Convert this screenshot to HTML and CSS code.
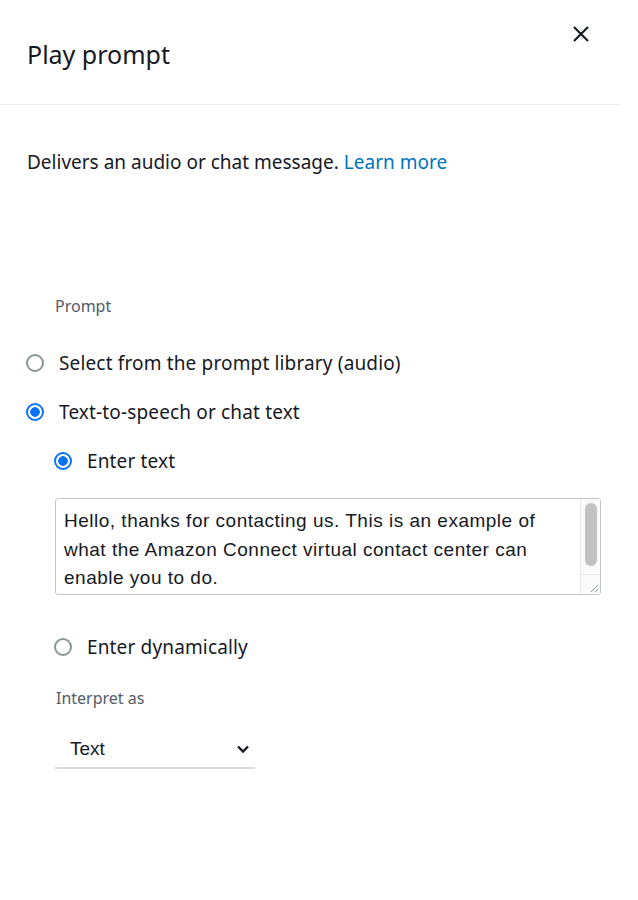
FILE: index.html
```html
<!DOCTYPE html>
<html>
<head>
<meta charset="utf-8">
<link rel="stylesheet" href="styles.css">
</head>
<body>
<div class="panel">
  <header class="header">
    <h1 class="title">Play prompt</h1>
    <button class="close" aria-label="Close">
      <svg width="18" height="18" viewBox="0 0 18 18"><path d="M2 2L16 16M16 2L2 16" stroke="#16191f" stroke-width="2.2" fill="none"/></svg>
    </button>
  </header>
  <main class="body">
    <p class="desc">Delivers an audio or chat message. <a class="link" href="#">Learn more</a></p>
    <div class="label prompt-label">Prompt</div>
    <div class="radio-row r1"><span class="radio"></span><span class="rtext">Select from the prompt library (audio)</span></div>
    <div class="radio-row r2"><span class="radio on"></span><span class="rtext">Text-to-speech or chat text</span></div>
    <div class="sub">
      <div class="radio-row r3"><span class="radio on"></span><span class="rtext">Enter text</span></div>
      <div class="textarea">
        <div class="ta-text">Hello, thanks for contacting us. This is an example of what the Amazon Connect virtual contact center can enable you to do.</div>
        <div class="ta-scroll">
          <div class="ta-track"><div class="ta-thumb"></div></div>
          <div class="ta-corner">
            <svg width="10" height="10" viewBox="0 0 10 10"><path d="M9 2L2 9M9 6L6 9" stroke="#8f9494" stroke-width="1" fill="none"/></svg>
          </div>
        </div>
      </div>
      <div class="radio-row r4"><span class="radio"></span><span class="rtext">Enter dynamically</span></div>
      <div class="label interp-label">Interpret as</div>
      <div class="select">
        <span class="sel-text">Text</span>
        <svg width="14" height="10" viewBox="0 0 14 10"><path d="M2 2.5L7 7.5L12 2.5" stroke="#16191f" stroke-width="2.4" fill="none"/></svg>
      </div>
    </div>
  </main>
</div>
</body>
</html>
```
FILE: styles.css
```css
* { box-sizing: border-box; }
html, body { margin: 0; padding: 0; background: #fff; }
body { font-family: "Noto Sans", "Open Sans", sans-serif; color: #16191f; }
.panel { width: 620px; }
.header {
  height: 105px;
  border-bottom: 1px solid #eaeded;
  display: flex;
  justify-content: space-between;
  align-items: flex-start;
  padding: 0 27px;
}
.title {
  margin: 38px 0 0 0;
  font-size: 25px;
  line-height: 32px;
  font-weight: 400;
  letter-spacing: 0;
  color: #16191f;
}
.close {
  margin-top: 25px;
  margin-right: 3px;
  border: 0;
  background: none;
  padding: 0;
  width: 18px;
  height: 18px;
}
.body { padding: 0 0 0 27px; }
.desc {
  margin: 45px 0 0 0;
  font-size: 19px;
  line-height: 24px;
  color: #16191f;
}
.link { color: #0073bb; text-decoration: none; }
.label { font-size: 16px; line-height: 22px; color: #545b64; }
.prompt-label { margin-top: 121px; padding-left: 28px; }
.radio-row { display: flex; align-items: center; height: 26px; }
.r1 { margin-top: 33px; }
.r2 { margin-top: 23px; }
.radio {
  width: 18px; height: 18px; border-radius: 50%;
  border: 2px solid #879596; flex: none; background: #fff;
  margin-left: -1px;
}
.radio.on { background: radial-gradient(circle, #0a73f5 0 4.5px, #fff 5px); border-color: #0a73f5; }
.rtext { margin-left: 15px; font-size: 19px; line-height: 24px; letter-spacing: 0.15px; color: #16191f; }
.sub { padding-left: 28px; }
.r3 { margin-top: 23px; }
.textarea {
  margin-top: 24px;
  width: 546px;
  height: 97px;
  border: 1px solid #c4c8c9;
  border-radius: 3px;
  display: flex;
}
.ta-text {
  flex: 1;
  padding: 8px 8px 0 8px;
  font-family: "Liberation Sans", Arial, sans-serif;
  font-size: 19px;
  letter-spacing: 0.5px;
  line-height: 28.5px;
  color: #16191f;
}
.ta-scroll {
  width: 20px;
  border-left: 1px solid #e7e7e7;
  display: flex;
  flex-direction: column;
  background: #fafafa;
}
.ta-track { flex: 1; padding: 4px 3px; }
.ta-thumb { width: 12px; height: 63px; border-radius: 6px; background: #c1c1c1; margin-left: 1px; }
.ta-corner {
  height: 20px; border-top: 1px solid #e7e7e7;
  display: flex; align-items: flex-end; justify-content: flex-end; padding: 0 1px 1px 0;
}
.r4 { margin-top: 39px; }
.interp-label { margin-top: 27px; padding-left: 1px; }
.select {
  margin-top: 29px;
  width: 200px;
  height: 31px;
  border-bottom: 2px solid #d5dbdb;
  display: flex;
  justify-content: space-between;
  align-items: flex-start;
  padding: 0 5px 0 15px;
}
.sel-text { font-family: "Liberation Sans", Arial, sans-serif; font-size: 19px; line-height: 22px; color: #16191f; }
.select svg { margin-top: 6px; }
```
